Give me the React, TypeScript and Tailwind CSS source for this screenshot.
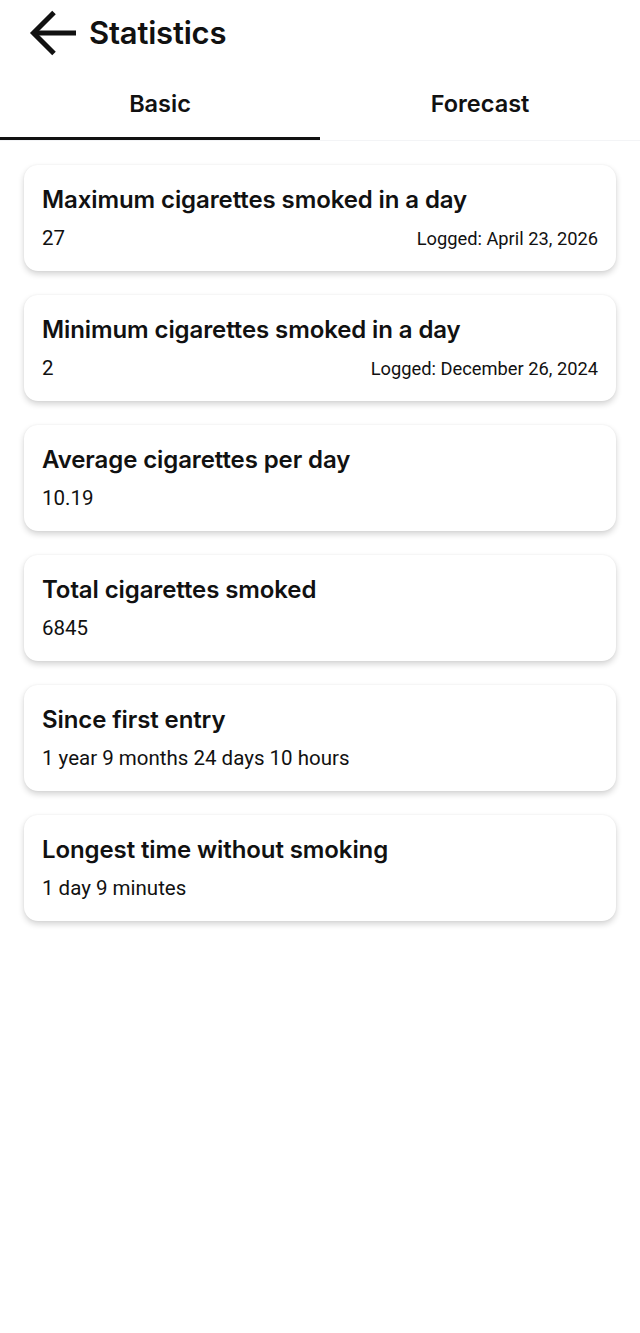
import React from 'react';

const stats = [
  { title: 'Maximum cigarettes smoked in a day', value: '27', logged: 'Logged: April 23, 2026' },
  { title: 'Minimum cigarettes smoked in a day', value: '2', logged: 'Logged: December 26, 2024' },
  { title: 'Average cigarettes per day', value: '10.19' },
  { title: 'Total cigarettes smoked', value: '6845' },
  { title: 'Since first entry', value: '1 year 9 months 24 days 10 hours' },
  { title: 'Longest time without smoking', value: '1 day 9 minutes' },
];

const BackArrow = () => (
  <svg width="48" height="48" viewBox="0 0 48 48" fill="none" stroke="#111" strokeWidth="5" strokeLinecap="butt">
    <path d="M47 24H6" />
    <path d="M25 3.5L4.5 24L25 44.5" strokeLinejoin="miter" />
  </svg>
);

export default function App() {
  return (
    <div className="min-h-[1333px] w-[640px] bg-white text-[#111]" style={{ fontFamily: 'Inter, "Noto Sans", sans-serif' }}>
      <header className="flex items-center h-[66px] pl-[29px]">
        <BackArrow />
        <h1 className="ml-[12px] text-[31px] font-semibold tracking-[-0.2px]">Statistics</h1>
      </header>

      <nav className="flex h-[75px] border-b border-gray-100">
        <div className="relative flex-1 flex items-center justify-center pt-[2px]">
          <span className="text-[23.5px] font-semibold">Basic</span>
          <div className="absolute left-0 right-0 bottom-0 h-[3px] bg-[#111]" />
        </div>
        <div className="flex-1 flex items-center justify-center pt-[2px]">
          <span className="text-[23.5px] font-semibold">Forecast</span>
        </div>
      </nav>

      <main className="flex flex-col gap-[24px] px-[24px] pt-[24px]">
        {stats.map((s, i) => (
          <div
            key={i}
            className="h-[106px] rounded-[14px] bg-white px-[18px] pt-[19px] shadow-[0_3px_6px_rgba(0,0,0,0.18),0_0_2px_rgba(0,0,0,0.06)]"
          >
            <div className="text-[24px] font-semibold leading-[32px] tracking-[-0.1px] whitespace-nowrap">{s.title}</div>
            <div className="mt-[7px] flex items-baseline justify-between" style={{ fontFamily: 'Roboto, sans-serif' }}>
              <span className="text-[20.5px]">{s.value}</span>
              {s.logged && <span className="text-[18.3px]">{s.logged}</span>}
            </div>
          </div>
        ))}
      </main>
    </div>
  );
}
